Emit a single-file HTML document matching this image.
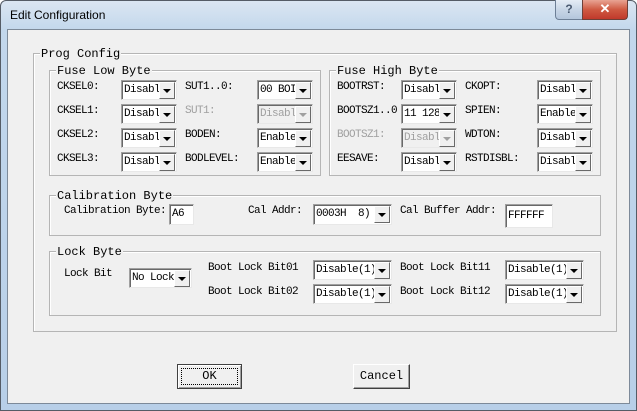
<!DOCTYPE html>
<html><head><meta charset="utf-8"><style>
*{margin:0;padding:0;box-sizing:border-box}
body{width:637px;height:411px;overflow:hidden;background:#fff;position:relative;font-family:"Liberation Mono","Noto Sans CJK SC",monospace}
.frame{position:absolute;left:0;top:0;width:637px;height:411px;background:linear-gradient(#dbe6f2,#c2d7ec 30px,#b8cfe8);border:1px solid #555c66;border-radius:6px 6px 0 0}
.title{position:absolute;left:10px;top:8px;font:12px "Liberation Sans",sans-serif;color:#000}
.client{position:absolute;left:7px;top:29px;width:623px;height:375px;background:#f0f0f0;border:1px solid #7d8a99}
.b{position:absolute}
.grp{position:absolute;border:1px solid #b5b5b5;box-shadow:1px 1px 0 #fff inset}
.gl{position:absolute;background:#f0f0f0;font-size:12px;line-height:12px;padding:0 1px;color:#000;white-space:nowrap}
.l{position:absolute;font-size:11px;line-height:12px;letter-spacing:-.6px;color:#000;white-space:nowrap}
.dis{color:#a0a0a0}
.cb{position:absolute;height:20px;background:#fff;border:1px solid #a0a0a0;border-right-color:#e8e8e8;border-bottom-color:#e8e8e8;box-shadow:inset 1px 1px 0 #696969;font-size:11px;line-height:18px;letter-spacing:-.6px;padding-left:2px;overflow:hidden;white-space:nowrap}
.cb i{position:absolute;right:1px;top:1px;width:16px;height:17px;background:#f0f0f0;border:1px solid;border-color:#fff #696969 #696969 #fff}
.cb i:after{content:"";position:absolute;left:3px;top:6px;border-left:4px solid transparent;border-right:4px solid transparent;border-top:4px solid #000}
.cb.d{background:#f0f0f0;color:#a0a0a0}
.cb.d i:after{border-top-color:#a0a0a0}
.ed{position:absolute;background:#fff;border:1px solid #a0a0a0;border-right-color:#e8e8e8;border-bottom-color:#e8e8e8;box-shadow:inset 1px 1px 0 #696969;font-size:11px;line-height:18px;padding-left:2px;letter-spacing:-.6px}
.btn{position:absolute;height:25px;background:#f0f0f0;border:1px solid;border-color:#fff #404040 #404040 #fff;box-shadow:inset -1px -1px 0 #a0a0a0;font-size:12px;text-align:center;line-height:22px}
</style></head><body>
<div class="frame"></div>
<div class="title">Edit Configuration</div>
<div class="b" style="left:555px;top:0;width:28px;height:20px;background:linear-gradient(#e4ecf5,#c8d6e6 50%,#b4c6dc);border:1px solid #6d7f96;border-top:none;border-radius:0 0 0 4px;text-align:center;font:bold 12px 'Liberation Sans';color:#4a5a70;line-height:18px">?</div>
<div class="b" style="left:582px;top:0;width:46px;height:20px;background:linear-gradient(#e8a493,#cf5a42 50%,#c0392b);border:1px solid #6d4038;border-top:none;border-radius:0 0 4px 0;text-align:center;font:bold 13px 'Liberation Sans';color:#fff;line-height:18px">✕</div>
<div class="client"></div>

<div class="grp" style="left:33px;top:53px;width:584px;height:279px"></div>
<div class="gl" style="left:40px;top:48px">Prog Config</div>

<div class="grp" style="left:49px;top:70px;width:272px;height:106px"></div>
<div class="gl" style="left:56px;top:65px">Fuse Low Byte</div>
<div class="grp" style="left:329px;top:70px;width:272px;height:106px"></div>
<div class="gl" style="left:336px;top:65px">Fuse High Byte</div>

<div class="l" style="left:57px;top:81px">CKSEL0:</div>
<div class="l" style="left:57px;top:105px">CKSEL1:</div>
<div class="l" style="left:57px;top:129px">CKSEL2:</div>
<div class="l" style="left:57px;top:153px">CKSEL3:</div>
<div class="cb" style="left:121px;top:80px;width:56px">Disabl<i></i></div>
<div class="cb" style="left:121px;top:104px;width:56px">Disabl<i></i></div>
<div class="cb" style="left:121px;top:128px;width:56px">Disabl<i></i></div>
<div class="cb" style="left:121px;top:152px;width:56px">Disabl<i></i></div>
<div class="l" style="left:185px;top:81px">SUT1..0:</div>
<div class="l dis" style="left:185px;top:105px">SUT1:</div>
<div class="l" style="left:185px;top:129px">BODEN:</div>
<div class="l" style="left:185px;top:153px">BODLEVEL:</div>
<div class="cb" style="left:257px;top:80px;width:56px">00 BOI<i></i></div>
<div class="cb d" style="left:257px;top:104px;width:56px">Disabl<i></i></div>
<div class="cb" style="left:257px;top:128px;width:56px">Enable<i></i></div>
<div class="cb" style="left:257px;top:152px;width:56px">Enable<i></i></div>

<div class="l" style="left:337px;top:81px">BOOTRST:</div>
<div class="l" style="left:337px;top:105px">BOOTSZ1..0</div>
<div class="l dis" style="left:337px;top:129px">BOOTSZ1:</div>
<div class="l" style="left:337px;top:153px">EESAVE:</div>
<div class="cb" style="left:401px;top:80px;width:56px">Disabl<i></i></div>
<div class="cb" style="left:401px;top:104px;width:56px">11 128<i></i></div>
<div class="cb d" style="left:401px;top:128px;width:56px">Disabl<i></i></div>
<div class="cb" style="left:401px;top:152px;width:56px">Disabl<i></i></div>
<div class="l" style="left:465px;top:81px">CKOPT:</div>
<div class="l" style="left:465px;top:105px">SPIEN:</div>
<div class="l" style="left:465px;top:129px">WDTON:</div>
<div class="l" style="left:465px;top:153px">RSTDISBL:</div>
<div class="cb" style="left:537px;top:80px;width:56px">Disabl<i></i></div>
<div class="cb" style="left:537px;top:104px;width:56px">Enable<i></i></div>
<div class="cb" style="left:537px;top:128px;width:56px">Disabl<i></i></div>
<div class="cb" style="left:537px;top:152px;width:56px">Disabl<i></i></div>

<div class="grp" style="left:49px;top:195px;width:552px;height:41px"></div>
<div class="gl" style="left:56px;top:190px">Calibration Byte</div>
<div class="l" style="left:64px;top:205px">Calibration Byte:</div>
<div class="ed" style="left:169px;top:204px;width:25px;height:21px">A6</div>
<div class="l" style="left:248px;top:205px">Cal Addr:</div>
<div class="cb" style="left:313px;top:204px;width:79px;height:21px">0003H&nbsp;&nbsp;8)<i></i></div>
<div class="l" style="left:400px;top:205px">Cal Buffer Addr:</div>
<div class="ed" style="left:505px;top:204px;width:48px;height:24px;line-height:22px">FFFFFF</div>

<div class="grp" style="left:49px;top:251px;width:552px;height:65px"></div>
<div class="gl" style="left:56px;top:246px">Lock Byte</div>
<div class="l" style="left:64px;top:268px">Lock Bit</div>
<div class="cb" style="left:129px;top:268px;width:63px">No Lock<i></i></div>
<div class="l" style="left:208px;top:262px">Boot Lock Bit01</div>
<div class="l" style="left:208px;top:286px">Boot Lock Bit02</div>
<div class="cb" style="left:313px;top:260px;width:79px">Disable(1)<i></i></div>
<div class="cb" style="left:313px;top:284px;width:79px">Disable(1)<i></i></div>
<div class="l" style="left:400px;top:262px">Boot Lock Bit11</div>
<div class="l" style="left:400px;top:286px">Boot Lock Bit12</div>
<div class="cb" style="left:505px;top:260px;width:79px">Disable(1)<i></i></div>
<div class="cb" style="left:505px;top:284px;width:79px">Disable(1)<i></i></div>

<div class="btn" style="left:177px;top:364px;width:65px;border-color:#404040;box-shadow:inset 1px 1px 0 #fff,inset -1px -1px 0 #a0a0a0"><span style="display:inline-block;border:1px dotted #000;width:57px;height:17px;line-height:15px;margin-top:2px">OK</span></div>
<div class="btn" style="left:353px;top:364px;width:57px">Cancel</div>
</body></html>
